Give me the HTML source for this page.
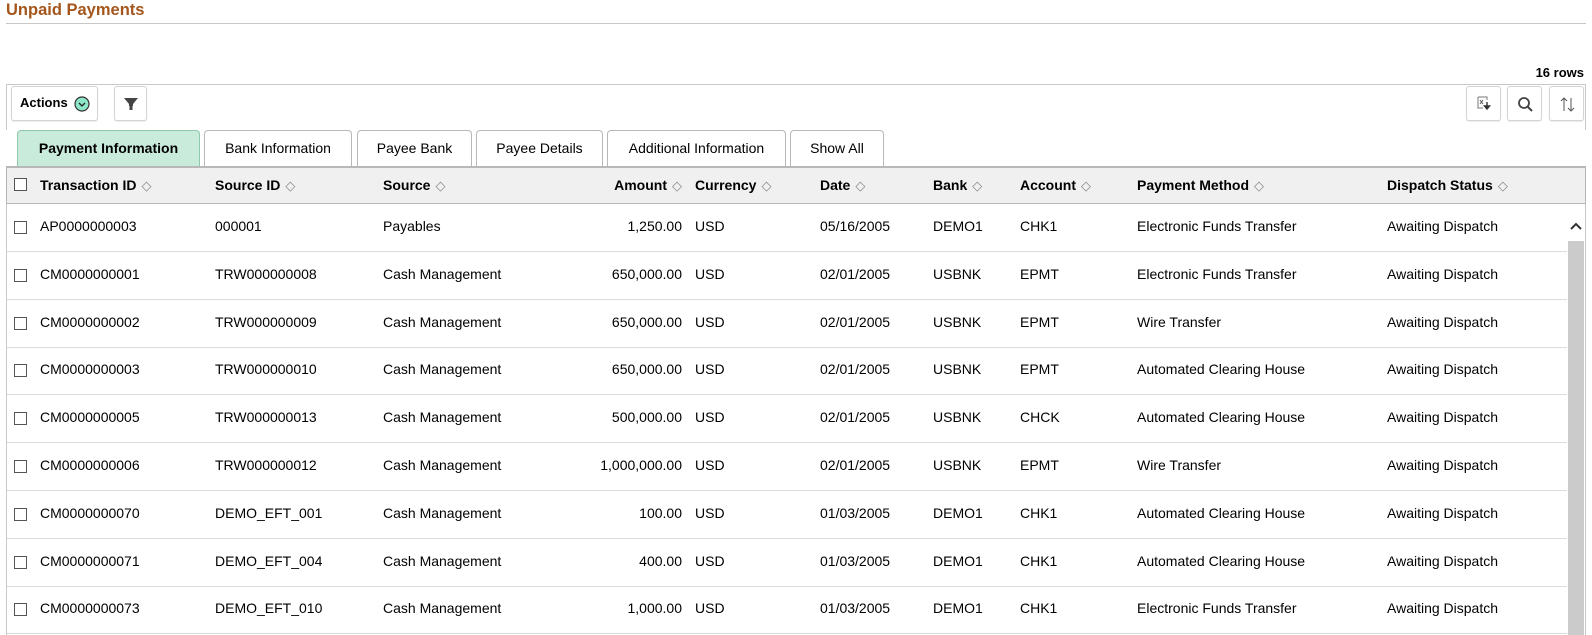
<!DOCTYPE html>
<html><head><meta charset="utf-8"><style>
*{box-sizing:border-box;margin:0;padding:0}
body{width:1592px;height:635px;overflow:hidden;background:#fff;font-family:"Liberation Sans",Arial,sans-serif;font-size:14px;color:#000;position:relative}
.a{position:absolute;white-space:nowrap}
.btn{position:absolute;border:1px solid #d4d4d4;border-radius:3px;background:#fff;box-shadow:0 1px 1px rgba(0,0,0,.08)}
.tab{position:absolute;top:130px;height:37px;border:1px solid #b8b8b8;border-bottom:none;border-radius:4px 4px 0 0;background:#fff;text-align:center;line-height:34px;font-size:14px}
.hd{font-weight:bold}
.s{color:#888;font-size:13px;font-weight:normal;margin-left:5px}
.cb{position:absolute;left:14px;width:13px;height:13px;border:1px solid #555;background:#fff}
.row{position:absolute;left:7px;width:1560px;border-bottom:1px solid #dcdcdc}
</style></head><body>
<div class="a" style="left:6px;top:1px;font-size:16.5px;font-weight:bold;color:#a4561c">Unpaid Payments</div>
<div class="a" style="left:6px;top:23px;width:1580px;height:1px;background:#c8c8c8"></div>
<div class="a" style="right:8px;top:65px;font-weight:bold;font-size:13px">16 rows</div>
<div class="a" style="left:6px;top:84px;width:1580px;height:1px;background:#c8c8c8"></div>
<div class="a" style="left:6px;top:84px;width:1px;height:46px;background:#c8c8c8"></div>
<div class="a" style="left:1585px;top:84px;width:1px;height:46px;background:#c8c8c8"></div>
<div class="btn" style="left:11px;top:86px;width:87px;height:35px"><span class="a" style="left:8px;top:8px;font-weight:bold;font-size:13px">Actions</span>
<svg class="a" style="left:62px;top:9px" width="16" height="16" viewBox="0 0 16 16"><circle cx="8" cy="8" r="7" fill="#8ee6c8" stroke="#333" stroke-width="1.2"/><path d="M5 7l3 3 3-3" fill="none" stroke="#222" stroke-width="1.3"/></svg></div>
<div class="btn" style="left:114px;top:86px;width:33px;height:35px"><svg class="a" style="left:8px;top:9px" width="16" height="16" viewBox="0 0 16 16"><path d="M1 2h14l-5 6v2H6V8z" fill="#444"/><rect x="6.5" y="10" width="3" height="4" fill="#444"/></svg></div>
<div class="btn" style="left:1466px;top:86px;width:35px;height:35px"><svg class="a" style="left:9px;top:8px" width="17" height="17" viewBox="0 0 17 17"><path d="M2 2h9v3M2 2v11h5" fill="none" stroke="#777"/><path d="M4 5l3 4M7 5l-3 4" stroke="#555" stroke-width="1"/><path d="M11 7v6M8.5 11l2.5 3 2.5-3z" stroke="#333" fill="#333" stroke-width="1.4"/></svg></div>
<div class="btn" style="left:1507px;top:86px;width:35px;height:35px"><svg class="a" style="left:9px;top:9px" width="17" height="17" viewBox="0 0 17 17"><circle cx="7" cy="7" r="5" fill="none" stroke="#444" stroke-width="1.8"/><path d="M10.5 10.5l4.5 4.5" stroke="#444" stroke-width="2"/></svg></div>
<div class="btn" style="left:1549px;top:86px;width:35px;height:35px"><svg class="a" style="left:9px;top:9px" width="17" height="17" viewBox="0 0 17 17"><path d="M5 15V2M2 5l3-3 3 3M12 2v13M9 12l3 3 3-3" fill="none" stroke="#555" stroke-width="1"/></svg></div>
<div class="tab" style="left:17px;width:183px;background:#c9ebdb;border-color:#8fc9ac;font-weight:bold">Payment Information</div>
<div class="tab" style="left:204px;width:148px">Bank Information</div>
<div class="tab" style="left:357px;width:115px">Payee Bank</div>
<div class="tab" style="left:476px;width:127px">Payee Details</div>
<div class="tab" style="left:607px;width:179px">Additional Information</div>
<div class="tab" style="left:790px;width:94px">Show All</div>
<div class="a" style="left:6px;top:166px;width:1580px;height:38px;background:#f0f0f0;border:1px solid #b8b8b8;border-top:2px solid #b8b8b8"></div>
<div class="a" style="left:6px;top:204px;width:1px;height:431px;background:#c8c8c8"></div>
<div class="a" style="left:1585px;top:204px;width:1px;height:431px;background:#c8c8c8"></div>
<div class="cb" style="top:178px"></div>
<div class="a hd" style="left:40px;top:177px">Transaction ID<span class="s">◇</span></div>
<div class="a hd" style="left:215px;top:177px">Source ID<span class="s">◇</span></div>
<div class="a hd" style="left:383px;top:177px">Source<span class="s">◇</span></div>
<div class="a hd" style="right:910px;top:177px">Amount<span class="s">◇</span></div>
<div class="a hd" style="left:695px;top:177px">Currency<span class="s">◇</span></div>
<div class="a hd" style="left:820px;top:177px">Date<span class="s">◇</span></div>
<div class="a hd" style="left:933px;top:177px">Bank<span class="s">◇</span></div>
<div class="a hd" style="left:1020px;top:177px">Account<span class="s">◇</span></div>
<div class="a hd" style="left:1137px;top:177px">Payment Method<span class="s">◇</span></div>
<div class="a hd" style="left:1387px;top:177px">Dispatch Status<span class="s">◇</span></div>
<div class="a" style="left:1568px;top:241px;width:16px;height:394px;background:#cbcbcb"></div>
<svg class="a" style="left:1570px;top:222px" width="12" height="8" viewBox="0 0 12 8"><path d="M1 7l5-5 5 5" fill="none" stroke="#333" stroke-width="2"/></svg>
<div id="rows"></div>
<script>
var d=[["AP0000000003","000001","Payables","1,250.00","05/16/2005","DEMO1","CHK1","Electronic Funds Transfer"],
["CM0000000001","TRW000000008","Cash Management","650,000.00","02/01/2005","USBNK","EPMT","Electronic Funds Transfer"],
["CM0000000002","TRW000000009","Cash Management","650,000.00","02/01/2005","USBNK","EPMT","Wire Transfer"],
["CM0000000003","TRW000000010","Cash Management","650,000.00","02/01/2005","USBNK","EPMT","Automated Clearing House"],
["CM0000000005","TRW000000013","Cash Management","500,000.00","02/01/2005","USBNK","CHCK","Automated Clearing House"],
["CM0000000006","TRW000000012","Cash Management","1,000,000.00","02/01/2005","USBNK","EPMT","Wire Transfer"],
["CM0000000070","DEMO_EFT_001","Cash Management","100.00","01/03/2005","DEMO1","CHK1","Automated Clearing House"],
["CM0000000071","DEMO_EFT_004","Cash Management","400.00","01/03/2005","DEMO1","CHK1","Automated Clearing House"],
["CM0000000073","DEMO_EFT_010","Cash Management","1,000.00","01/03/2005","DEMO1","CHK1","Electronic Funds Transfer"]];
var h="";
d.forEach(function(r,i){var t=204+i*47.8;var y=t+14;
h+='<div class="row" style="top:'+t+'px;height:48px"></div>';
h+='<div class="cb" style="top:'+(y+3)+'px"></div>';
h+='<div class="a" style="left:40px;top:'+y+'px">'+r[0]+'</div>';
h+='<div class="a" style="left:215px;top:'+y+'px">'+r[1]+'</div>';
h+='<div class="a" style="left:383px;top:'+y+'px">'+r[2]+'</div>';
h+='<div class="a" style="right:910px;top:'+y+'px">'+r[3]+'</div>';
h+='<div class="a" style="left:695px;top:'+y+'px">USD</div>';
h+='<div class="a" style="left:820px;top:'+y+'px">'+r[4]+'</div>';
h+='<div class="a" style="left:933px;top:'+y+'px">'+r[5]+'</div>';
h+='<div class="a" style="left:1020px;top:'+y+'px">'+r[6]+'</div>';
h+='<div class="a" style="left:1137px;top:'+y+'px">'+r[7]+'</div>';
h+='<div class="a" style="left:1387px;top:'+y+'px">Awaiting Dispatch</div>';});
document.getElementById("rows").innerHTML=h;
</script>
</body></html>
